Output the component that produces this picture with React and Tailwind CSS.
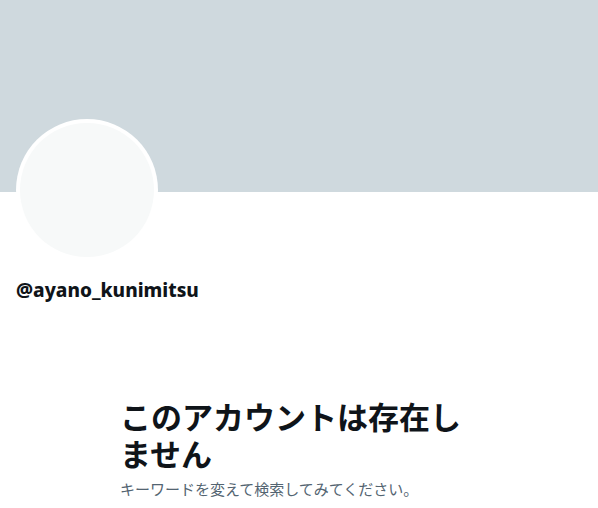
import React from "react";

const App = () => {
  return (
    <div
      className="w-[598px] h-[508px] bg-white overflow-hidden"
      style={{ fontFamily: '"Noto Sans", "Noto Sans CJK JP", sans-serif' }}
    >
      {/* Banner */}
      <div className="h-[192px] bg-[#cfd9de]" />

      {/* Avatar + handle */}
      <div className="px-[16px]">
        <div className="-mt-[73px] w-[142px] h-[142px] rounded-full bg-white p-[4px]">
          <div className="w-full h-full rounded-full bg-[#f7f9f9]" />
        </div>
        <div className="mt-[17px] text-[19px] leading-[24px] font-extrabold text-[#0f1419]">
          @ayano_kunimitsu
        </div>
      </div>

      {/* Empty state */}
      <div className="mt-[95px] ml-[120px] w-[352px]">
        <h1 className="text-[31px] leading-[37px] font-bold text-[#0f1419]" style={{ fontFamily: '"Noto Sans CJK JP", sans-serif' }}>
          このアカウントは存在しません
        </h1>
        <p className="mt-[8px] text-[15px] leading-[20px] text-[#536471]" style={{ fontFamily: '"Noto Sans CJK JP", sans-serif' }}>
          キーワードを変えて検索してみてください。
        </p>
      </div>
    </div>
  );
};

export default App;
